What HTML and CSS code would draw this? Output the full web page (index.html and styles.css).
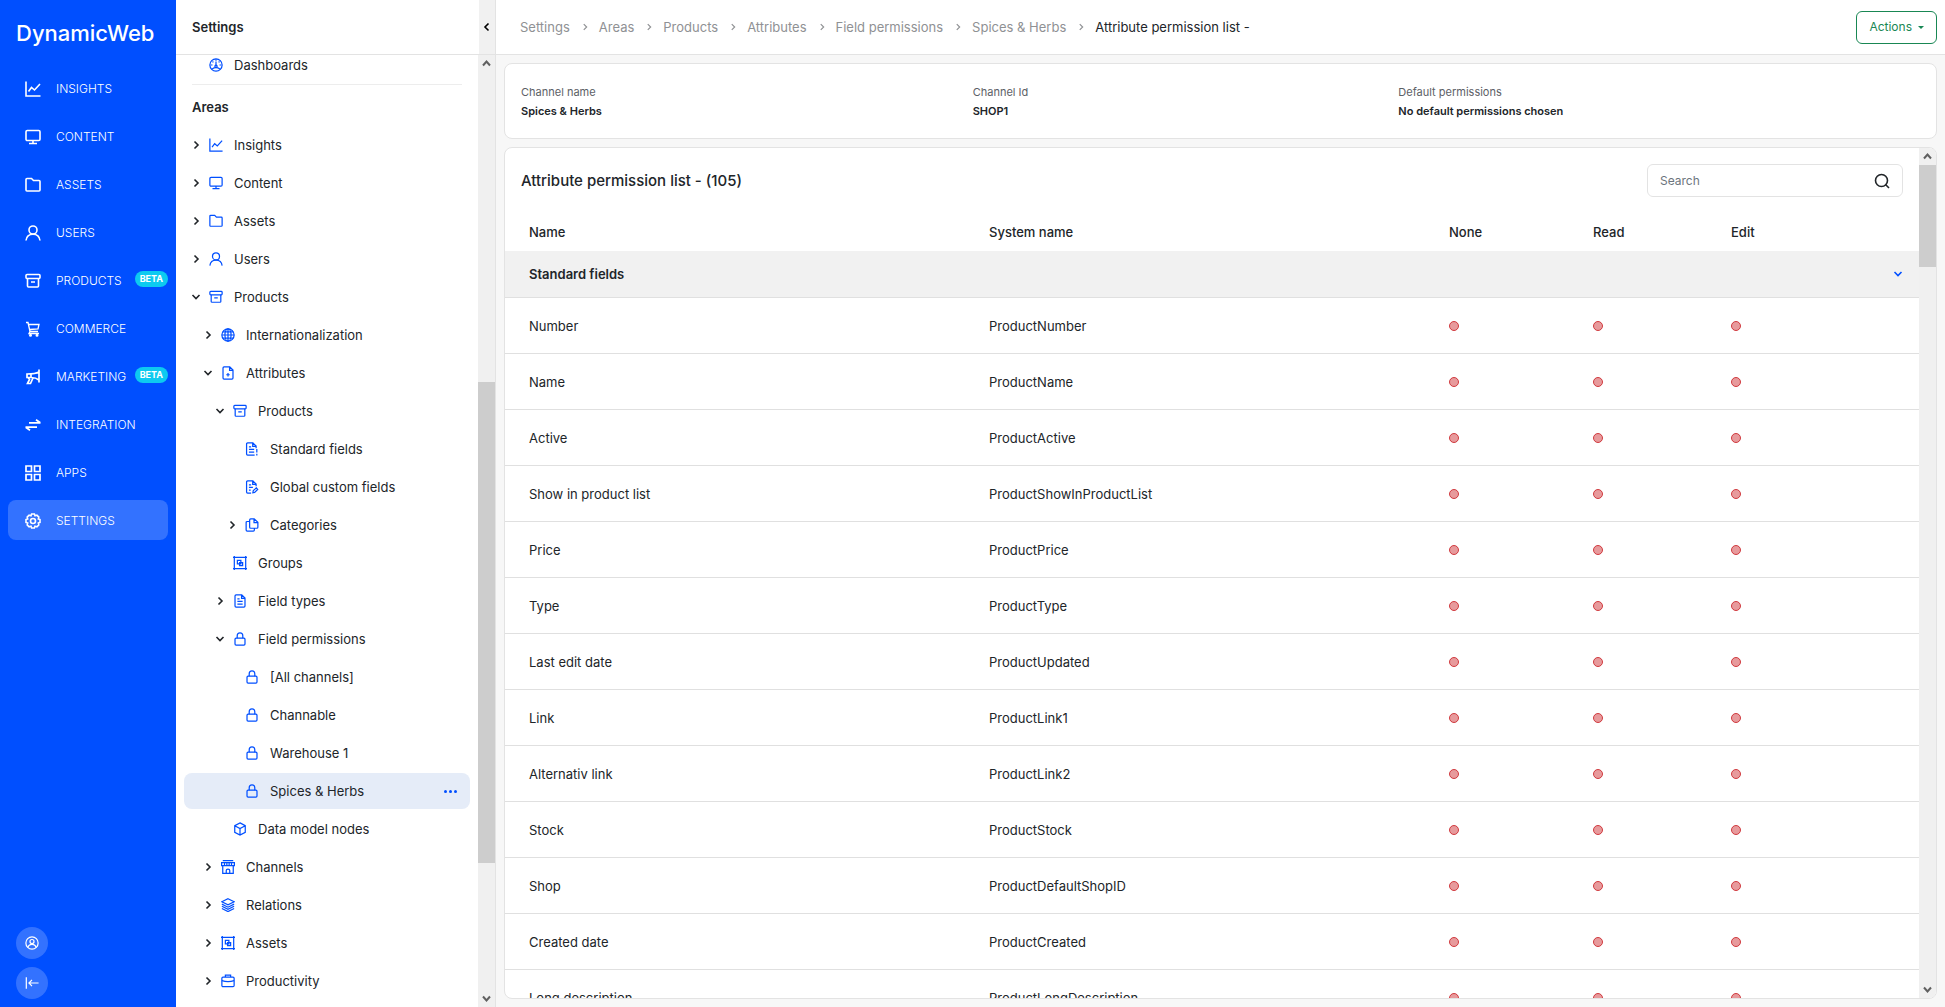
FILE: index.html
```html
<!DOCTYPE html>
<html lang="en">
<head>
<meta charset="utf-8">
<meta name="viewport" content="width=device-width, initial-scale=1">
<title>Attribute permission list</title>
<link rel="stylesheet" href="styles.css">
</head>
<body>
<svg class="sprite" aria-hidden="true">
  <symbol id="i-chart" viewBox="0 0 16 16"><path d="M1 .5V15H15.500M3.500 10.500 6.500 6.500 9.500 9 15 3"/></symbol>
  <symbol id="i-monitor" viewBox="0 0 16 16"><rect x="1" y="1.500" width="14" height="10" rx="1.300"/><path d="M8 11.500V14.500M4 14.500H12"/></symbol>
  <symbol id="i-folder" viewBox="0 0 16 16"><path d="M1 13V2.500Q1 1.500 2 1.500H6.500L8.500 3.500H14Q15 3.500 15 4.500V13Q15 14 14 14H2Q1 14 1 13Z"/></symbol>
  <symbol id="i-user" viewBox="0 0 16 16"><circle cx="8" cy="5" r="4"/><path d="M1 15.500C1.500 11 4 9.200 8 9.200S14.500 11 15 15.500"/></symbol>
  <symbol id="i-archive" viewBox="0 0 16 16"><rect x="1" y="1.500" width="14" height="4" rx="1"/><path d="M2.500 5.500V13Q2.500 14 3.500 14H12.500Q13.500 14 13.500 13V5.500M6 9H10"/></symbol>
  <symbol id="i-cart" viewBox="0 0 16 16"><path d="M1 1.500H3L5 10.500H13M3.500 3.500H14L13 8 4.700 8.500M5 10.500 4 12.500H14" stroke-width="1.300"/><circle cx="5.500" cy="14.300" r=".7"/><circle cx="12" cy="14.300" r=".7"/></symbol>
  <symbol id="i-horn" viewBox="0 0 16 16"><path d="M14 .5V13.500M14 3Q10.500 5 2 5V8.500H6Q11 8.500 14 11M3 8.500 4.500 10.500 2.500 14.500H5.500L8 9M6 5V8.500" stroke-width="1.700"/></symbol>
  <symbol id="i-swap" viewBox="0 0 16 16"><path d="M4 5.800H15.500M11 2.800 15.300 5.800M12 10.200H.5M5 13.200 .7 10.200" stroke-width="1.800"/></symbol>
  <symbol id="i-grid" viewBox="0 0 16 16"><path d="M1 1H6.500V6.500H1ZM9.500 1H15V6.500H9.500ZM1 9.500H6.500V15H1ZM9.500 9.500H15V15H9.500Z" stroke-width="1.700"/></symbol>
  <symbol id="i-gear" viewBox="0 0 16 16"><path d="M6.600 1H9.400L10 2.700 11.900 2.200 13.800 4.100 13.300 6 15 6.600V9.400L13.300 10 13.800 11.900 11.900 13.800 10 13.300 9.400 15H6.600L6 13.300 4.100 13.800 2.200 11.900 2.700 10 1 9.400V6.600L2.700 6 2.200 4.100 4.100 2.200 6 2.700Z" stroke-width="1.600"/><circle cx="8" cy="8" r="2.500"/></symbol>
  <symbol id="i-gauge" viewBox="0 0 16 16"><circle cx="8" cy="8" r="7"/><path d="M8 4V9.500M8 1.500V3M2 8H4M12 8H14M4 4 5 5M12 4 11 5M3.500 12.500Q8 9.500 12.500 12.500"/><circle cx="8" cy="9.500" r="1.300"/></symbol>
  <symbol id="i-globe" viewBox="0 0 16 16"><circle cx="8" cy="8" r="7"/><ellipse cx="8" cy="8" rx="3.500" ry="7"/><path d="M8 1V15M1 8H15M2 4.500H14M2 11.500H14"/></symbol>
  <symbol id="i-file-plus" viewBox="0 0 16 16"><path d="M10 1H3.500Q2.300 1 2.300 2.200V13.800Q2.300 15 3.500 15H12.500Q13.700 15 13.700 13.800V4.700ZM9.800 1V5H13.700M8 8V12M6 10H10"/></symbol>
  <symbol id="i-file" viewBox="0 0 16 16"><path d="M10 1H3.500Q2.300 1 2.300 2.200V13.800Q2.300 15 3.500 15H12.500Q13.700 15 13.700 13.800V4.700ZM9.800 1V5H13.700M5 5.500H7.500M5 8.500H11M5 11.500H11"/></symbol>
  <symbol id="i-file-std" viewBox="0 0 16 16"><path d="M11 15H3Q1.800 15 1.800 13.800V2.200Q1.800 1 3 1H9L12.700 4.700V7M8.800 1V5H12.700M4.500 5.500H7M4.500 8.500H10.500M4.500 11.500H10.500M13.500 8V12M13.500 13.500V15.300"/></symbol>
  <symbol id="i-file-edit" viewBox="0 0 16 16"><path d="M7 15H3Q1.800 15 1.800 13.800V2.200Q1.800 1 3 1H9L12.700 4.700V7M8.800 1V5H12.700M4.500 5.500H7M4.500 8.500H9M4.500 11.500H6.500M9 14.500 9.500 12 13 9 14.500 10.800 11 14.200Z"/></symbol>
  <symbol id="i-files" viewBox="0 0 16 16"><path d="M10.500 1H6.500Q5.300 1 5.300 2.200V10.500Q5.300 11.700 6.500 11.700H13.500Q14.700 11.700 14.700 10.500V5ZM10.300 1V5.200H14.700M5 4H2.500Q1.300 4 1.300 5.200V13.800Q1.300 15 2.500 15H9.500Q10.700 15 10.700 13.800V12"/></symbol>
  <symbol id="i-group" viewBox="0 0 16 16"><path d="M1.500 0V16M14.500 0V16M0 1.500H16M0 14.500H16M5 5H9V9H5ZM7.500 7.500H11V11H7.500Z"/></symbol>
  <symbol id="i-lock" viewBox="0 0 16 16"><rect x="2.300" y="7" width="11.400" height="8" rx="1.200"/><path d="M4.800 7V4.300Q4.800 1 8 1T11.200 4.300V7"/></symbol>
  <symbol id="i-cube" viewBox="0 0 16 16"><path d="M8 1 14 4.200V11.800L8 15 2 11.800V4.200ZM2 4.200 8 7.500 14 4.200M8 7.500V15"/></symbol>
  <symbol id="i-store" viewBox="0 0 16 16"><path d="M2 .7H14M.7 3H15.300V6.500H.7ZM4 3V6.500M6.700 3V6.500M9.300 3V6.500M12 3V6.500M2 6.500V15.300H14V6.500M6 15V12Q6 10.500 8 10.500T10 12V15"/></symbol>
  <symbol id="i-layers" viewBox="0 0 16 16"><path d="M8 .8 15 4.300 8 7.800 1 4.300ZM1 7 8 10.500 15 7M1 9.500 8 13 15 9.500M1 12 8 15.500 15 12"/></symbol>
  <symbol id="i-case" viewBox="0 0 16 16"><rect x="1" y="3.500" width="14" height="11" rx="1.300"/><path d="M5 3.500V1.200H11V3.500M1 7.500Q8 10 15 7.500"/></symbol>
  <symbol id="i-profile" viewBox="0 0 16 16"><circle cx="8" cy="8" r="7"/><circle cx="8" cy="6.300" r="2.300"/><path d="M3.500 13Q4 9.500 8 9.500T12.500 13"/></symbol>
  <symbol id="i-dock" viewBox="0 0 16 16"><path d="M1.500 1.500V14.500M15.500 8H4.500M8 4.500 4.500 8 8 11.500"/></symbol>
  <symbol id="i-right" viewBox="0 0 12 12"><path d="M4.500 2.500 8 6 4.500 9.500"/></symbol>
  <symbol id="i-left" viewBox="0 0 12 12"><path d="M7.500 2.500 4 6 7.500 9.500"/></symbol>
  <symbol id="i-down" viewBox="0 0 12 12"><path d="M2.500 4 6 7.500 9.500 4"/></symbol>
  <symbol id="i-arrow-up" viewBox="0 0 17 17"><path d="M5 10.500 8.500 6.500 12 10.500"/></symbol>
  <symbol id="i-arrow-down" viewBox="0 0 17 17"><path d="M5 6.500 8.500 10.500 12 6.500"/></symbol>
  <symbol id="i-search" viewBox="0 0 16 16"><circle cx="7.500" cy="7.500" r="6"/><path d="M11.500 11.500 15 15"/></symbol>
</svg>

<div class="app">
  <aside class="rail">
    <div class="logo">DynamicWeb</div>
    <nav class="areas" aria-label="Areas">
      <a class="area" href="#"><svg class="icon"><use href="#i-chart"/></svg>INSIGHTS</a>
      <a class="area" href="#"><svg class="icon"><use href="#i-monitor"/></svg>CONTENT</a>
      <a class="area" href="#"><svg class="icon"><use href="#i-folder"/></svg>ASSETS</a>
      <a class="area" href="#"><svg class="icon"><use href="#i-user"/></svg>USERS</a>
      <a class="area" href="#"><svg class="icon"><use href="#i-archive"/></svg>PRODUCTS<span class="beta">BETA</span></a>
      <a class="area" href="#"><svg class="icon"><use href="#i-cart"/></svg>COMMERCE</a>
      <a class="area" href="#"><svg class="icon"><use href="#i-horn"/></svg>MARKETING<span class="beta">BETA</span></a>
      <a class="area" href="#"><svg class="icon"><use href="#i-swap"/></svg>INTEGRATION</a>
      <a class="area" href="#"><svg class="icon"><use href="#i-grid"/></svg>APPS</a>
      <a class="area current" href="#" aria-current="page"><svg class="icon"><use href="#i-gear"/></svg>SETTINGS</a>
    </nav>
    <div class="rail-tools">
      <button class="round" type="button" aria-label="Profile"><svg class="icon small"><use href="#i-profile"/></svg></button>
      <button class="round" type="button" aria-label="Collapse menu"><svg class="icon small"><use href="#i-dock"/></svg></button>
    </div>
  </aside>

  <section class="panel">
    <header class="panel-head">
      <h1 class="panel-title">Settings</h1>
      <button class="fold" type="button" aria-label="Collapse panel"><svg class="chev"><use href="#i-left"/></svg></button>
    </header>
    <div class="panel-body">
      <nav class="tree" aria-label="Settings">
        <a class="node" href="#"><span class="chev"></span><svg class="icon small"><use href="#i-gauge"/></svg>Dashboards</a>
        <h2 class="tree-title">Areas</h2>
        <a class="node" href="#"><svg class="chev"><use href="#i-right"/></svg><svg class="icon small"><use href="#i-chart"/></svg>Insights</a>
        <a class="node" href="#"><svg class="chev"><use href="#i-right"/></svg><svg class="icon small"><use href="#i-monitor"/></svg>Content</a>
        <a class="node" href="#"><svg class="chev"><use href="#i-right"/></svg><svg class="icon small"><use href="#i-folder"/></svg>Assets</a>
        <a class="node" href="#"><svg class="chev"><use href="#i-right"/></svg><svg class="icon small"><use href="#i-user"/></svg>Users</a>
        <a class="node" href="#"><svg class="chev"><use href="#i-down"/></svg><svg class="icon small"><use href="#i-archive"/></svg>Products</a>
        <a class="node l1" href="#"><svg class="chev"><use href="#i-right"/></svg><svg class="icon small"><use href="#i-globe"/></svg>Internationalization</a>
        <a class="node l1" href="#"><svg class="chev"><use href="#i-down"/></svg><svg class="icon small"><use href="#i-file-plus"/></svg>Attributes</a>
        <a class="node l2" href="#"><svg class="chev"><use href="#i-down"/></svg><svg class="icon small"><use href="#i-archive"/></svg>Products</a>
        <a class="node l3" href="#"><span class="chev"></span><svg class="icon small"><use href="#i-file-std"/></svg>Standard fields</a>
        <a class="node l3" href="#"><span class="chev"></span><svg class="icon small"><use href="#i-file-edit"/></svg>Global custom fields</a>
        <a class="node l3" href="#"><svg class="chev"><use href="#i-right"/></svg><svg class="icon small"><use href="#i-files"/></svg>Categories</a>
        <a class="node l2" href="#"><span class="chev"></span><svg class="icon small"><use href="#i-group"/></svg>Groups</a>
        <a class="node l2" href="#"><svg class="chev"><use href="#i-right"/></svg><svg class="icon small"><use href="#i-file"/></svg>Field types</a>
        <a class="node l2" href="#"><svg class="chev"><use href="#i-down"/></svg><svg class="icon small"><use href="#i-lock"/></svg>Field permissions</a>
        <a class="node l3" href="#"><span class="chev"></span><svg class="icon small"><use href="#i-lock"/></svg>[All channels]</a>
        <a class="node l3" href="#"><span class="chev"></span><svg class="icon small"><use href="#i-lock"/></svg>Channable</a>
        <a class="node l3" href="#"><span class="chev"></span><svg class="icon small"><use href="#i-lock"/></svg>Warehouse 1</a>
        <div class="node l3 selected"><span class="chev"></span><svg class="icon small"><use href="#i-lock"/></svg><a class="node-link" href="#" aria-current="page">Spices &amp; Herbs</a><button class="more" type="button" aria-label="More"><i class="pip"></i><i class="pip"></i><i class="pip"></i></button></div>
        <a class="node l2" href="#"><span class="chev"></span><svg class="icon small"><use href="#i-cube"/></svg>Data model nodes</a>
        <a class="node l1" href="#"><svg class="chev"><use href="#i-right"/></svg><svg class="icon small"><use href="#i-store"/></svg>Channels</a>
        <a class="node l1" href="#"><svg class="chev"><use href="#i-right"/></svg><svg class="icon small"><use href="#i-layers"/></svg>Relations</a>
        <a class="node l1" href="#"><svg class="chev"><use href="#i-right"/></svg><svg class="icon small"><use href="#i-group"/></svg>Assets</a>
        <a class="node l1" href="#"><svg class="chev"><use href="#i-right"/></svg><svg class="icon small"><use href="#i-case"/></svg>Productivity</a>
      </nav>
      <div class="scrollbar" aria-hidden="true">
        <svg class="arrow"><use href="#i-arrow-up"/></svg>
        <div class="track tree-track"><div class="thumb"></div></div>
        <svg class="arrow"><use href="#i-arrow-down"/></svg>
      </div>
    </div>
  </section>

  <main class="main">
    <header class="topbar">
      <nav class="crumbs" aria-label="Breadcrumb">
        <a class="crumb" href="#">Settings</a><svg class="sep"><use href="#i-right"/></svg>
        <a class="crumb" href="#">Areas</a><svg class="sep"><use href="#i-right"/></svg>
        <a class="crumb" href="#">Products</a><svg class="sep"><use href="#i-right"/></svg>
        <a class="crumb" href="#">Attributes</a><svg class="sep"><use href="#i-right"/></svg>
        <a class="crumb" href="#">Field permissions</a><svg class="sep"><use href="#i-right"/></svg>
        <a class="crumb" href="#">Spices &amp; Herbs</a><svg class="sep"><use href="#i-right"/></svg>
        <span class="crumb here" aria-current="page">Attribute permission list -</span>
      </nav>
      <button class="actions" type="button">Actions<span class="caret"></span></button>
    </header>

    <div class="content">
      <dl class="card info">
        <div><dt>Channel name</dt><dd>Spices &amp; Herbs</dd></div>
        <div><dt>Channel Id</dt><dd>SHOP1</dd></div>
        <div><dt>Default permissions</dt><dd>No default permissions chosen</dd></div>
      </dl>

      <section class="card list">
        <div class="list-main">
          <div class="list-head">
            <h2 class="list-title">Attribute permission list - (105)</h2>
            <label class="search"><input class="search-input" type="text" placeholder="Search" aria-label="Search"><svg class="icon"><use href="#i-search"/></svg></label>
          </div>
          <table class="grid">
            <colgroup><col><col><col class="c-none"><col class="c-read"><col class="c-edit"></colgroup>
            <thead><tr><th>Name</th><th>System name</th><th>None</th><th>Read</th><th>Edit</th></tr></thead>
            <tbody>
              <tr class="group"><th colspan="5"><span class="group-in">Standard fields<button class="group-toggle" type="button" aria-label="Collapse group"><svg class="chev"><use href="#i-down"/></svg></button></span></th></tr>
              <tr><td>Number</td><td>ProductNumber</td><td><span class="dot"></span></td><td><span class="dot"></span></td><td><span class="dot"></span></td></tr>
              <tr><td>Name</td><td>ProductName</td><td><span class="dot"></span></td><td><span class="dot"></span></td><td><span class="dot"></span></td></tr>
              <tr><td>Active</td><td>ProductActive</td><td><span class="dot"></span></td><td><span class="dot"></span></td><td><span class="dot"></span></td></tr>
              <tr><td>Show in product list</td><td>ProductShowInProductList</td><td><span class="dot"></span></td><td><span class="dot"></span></td><td><span class="dot"></span></td></tr>
              <tr><td>Price</td><td>ProductPrice</td><td><span class="dot"></span></td><td><span class="dot"></span></td><td><span class="dot"></span></td></tr>
              <tr><td>Type</td><td>ProductType</td><td><span class="dot"></span></td><td><span class="dot"></span></td><td><span class="dot"></span></td></tr>
              <tr><td>Last edit date</td><td>ProductUpdated</td><td><span class="dot"></span></td><td><span class="dot"></span></td><td><span class="dot"></span></td></tr>
              <tr><td>Link</td><td>ProductLink1</td><td><span class="dot"></span></td><td><span class="dot"></span></td><td><span class="dot"></span></td></tr>
              <tr><td>Alternativ link</td><td>ProductLink2</td><td><span class="dot"></span></td><td><span class="dot"></span></td><td><span class="dot"></span></td></tr>
              <tr><td>Stock</td><td>ProductStock</td><td><span class="dot"></span></td><td><span class="dot"></span></td><td><span class="dot"></span></td></tr>
              <tr><td>Shop</td><td>ProductDefaultShopID</td><td><span class="dot"></span></td><td><span class="dot"></span></td><td><span class="dot"></span></td></tr>
              <tr><td>Created date</td><td>ProductCreated</td><td><span class="dot"></span></td><td><span class="dot"></span></td><td><span class="dot"></span></td></tr>
              <tr><td>Long description</td><td>ProductLongDescription</td><td><span class="dot"></span></td><td><span class="dot"></span></td><td><span class="dot"></span></td></tr>
            </tbody>
          </table>
        </div>
        <div class="scrollbar" aria-hidden="true">
          <svg class="arrow"><use href="#i-arrow-up"/></svg>
          <div class="track list-track"><div class="thumb"></div></div>
          <svg class="arrow"><use href="#i-arrow-down"/></svg>
        </div>
      </section>
    </div>
  </main>
</div>
</body>
</html>
```
FILE: styles.css
```css
* { box-sizing: border-box; }

body {
  margin: 0;
  font: 13px/20px Inter, "Liberation Sans", sans-serif;
  color: #212529;
  background: #f7f7f7;
}

h1, h2, dl, dd { margin: 0; }
a { color: inherit; text-decoration: none; }
button { font: inherit; padding: 0; border: 0; background: none; cursor: pointer; }

.sprite { position: absolute; width: 0; height: 0; }
.icon, .chev, .arrow, .sep {
  flex: none;
  fill: none;
  stroke: currentColor;
}
.icon { width: 16px; height: 16px; stroke-width: 1.6; }
.small { width: 14px; height: 14px; stroke-width: 1.4; }
.chev { width: 12px; height: 12px; stroke-width: 1.6; }

.app { display: flex; height: 100vh; overflow: hidden; }

/* Blue area rail */
.rail {
  display: flex;
  flex-direction: column;
  flex: none;
  width: 176px;
  padding: 0 8px 8px;
  background: #004fff;
  color: #fff;
}
.logo { padding: 21px 8px 15px; font-size: 22px; line-height: 24px; font-weight: 500; }
.areas { display: flex; flex-direction: column; gap: 8px; padding-top: 8px; }
.area {
  display: flex;
  align-items: center;
  height: 40px;
  padding: 2px 0 0 17px;
  border-radius: 8px;
  font-size: 12px;
  font-weight: 300;
}
.area .icon { margin-right: 15px; }
.area.current { background: #3372ff; }
.beta {
  margin: 0 0 4px auto;
  padding: 0 5px;
  border-radius: 8px;
  background: #0dcaf0;
  font-size: 9px;
  line-height: 16px;
  font-weight: 700;
}
.rail-tools { display: flex; flex-direction: column; gap: 8px; margin-top: auto; padding-left: 8px; }
.round {
  display: flex;
  align-items: center;
  justify-content: center;
  width: 32px;
  height: 32px;
  border-radius: 50%;
  background: #3372ff;
  color: #fff;
}

/* Settings tree */
.panel {
  display: flex;
  flex-direction: column;
  flex: none;
  width: 320px;
  border-right: 1px solid #e3e3e3;
  background: #fff;
}
.panel-head { display: flex; flex: none; height: 55px; border-bottom: 1px solid #e3e3e3; }
.panel-title { flex: 1; padding-left: 16px; font-size: 13px; line-height: 54px; font-weight: 600; }
.fold {
  display: flex;
  align-items: center;
  justify-content: center;
  width: 16px;
  background: #f1f1f1;
  color: #000;
}
.panel-body { display: flex; flex: 1; min-height: 0; }
.tree {
  display: flex;
  flex-direction: column;
  gap: 2px;
  flex: 1;
  margin-top: -8px;
  padding: 0 8px;
  clip-path: inset(8px 0 0 0);
}
.node {
  display: flex;
  align-items: center;
  flex: none;
  height: 36px;
  padding-left: 6px;
  border-radius: 8px;
}
.node .icon { margin: 0 11px 0 7px; color: #004fff; }
.node.l1 { padding-left: 18px; }
.node.l2 { padding-left: 30px; }
.node.l3 { padding-left: 42px; }
.selected { background: #e5ecf8; }
.node-link { flex: 1; }
.more { display: flex; gap: 2px; padding: 8px 13px; color: #004fff; }
.pip { width: 3px; height: 3px; border-radius: 50%; background: currentColor; }
.tree-title {
  margin: -1px 8px 0;
  padding: 12px 0 8px;
  border-top: 1px solid #ededed;
  font-size: 13px;
  line-height: 20px;
  font-weight: 600;
}

.scrollbar { display: flex; flex-direction: column; flex: none; width: 17px; background: #f0f0f0; }
.arrow { width: 17px; height: 17px; stroke: #606060; stroke-width: 2; }
.track { display: grid; flex: 1; }
.tree-track { grid-template-rows: 310fr 481fr 127fr; }
.list-track { grid-template-rows: 0 102fr 715fr; }
.thumb { grid-row: 2; background: #cdcdcd; }

/* Right side */
.main { display: flex; flex-direction: column; flex: 1; min-width: 0; }
.topbar {
  display: flex;
  align-items: center;
  justify-content: space-between;
  flex: none;
  height: 55px;
  padding: 0 8px 0 24px;
  border-bottom: 1px solid #e3e3e3;
  background: #fff;
}
.crumbs { display: flex; align-items: center; color: #8f9194; }
.sep { width: 10px; height: 10px; margin: 0 9px 0 10px; stroke-width: 1.4; }
.here { color: #212529; }
.actions {
  display: flex;
  align-items: center;
  gap: 6px;
  height: 33px;
  padding: 0 12px;
  border: 1px solid #198754;
  border-radius: 6px;
  color: #198754;
  font-size: 12px;
}
.caret { border: 3px solid transparent; border-top-color: currentColor; border-bottom: 0; }

.content { display: flex; flex-direction: column; gap: 8px; flex: 1; min-height: 0; padding: 8px; }
.card { border: 1px solid #e3e3e3; border-radius: 8px; background: #fff; }
.info {
  display: grid;
  grid-template-columns: 452fr 426fr 522fr;
  flex: none;
  padding: 19px 16px 17px;
  font-size: 11px;
  line-height: 19px;
}
.info dt { color: #5c6066; }
.info dd { font-weight: 600; }

.list { display: flex; flex: 1; min-height: 0; overflow: hidden; }
.list-main { flex: 1; min-width: 0; }
.list-head { display: flex; align-items: center; justify-content: space-between; padding: 16px; }
.list-title { font-size: 15px; font-weight: 500; }
.search {
  display: flex;
  align-items: center;
  width: 256px;
  height: 33px;
  padding: 0 12px;
  border: 1px solid #e3e3e3;
  border-radius: 6px;
}
.search-input { flex: 1; min-width: 0; padding: 0; border: 0; outline: 0; font: inherit; font-size: 12px; }
.search-input::placeholder { color: #6c757d; opacity: 1; }

.grid { width: 100%; table-layout: fixed; border-collapse: separate; border-spacing: 0; }
.c-none { width: 144px; }
.c-read { width: 138px; }
.c-edit { width: 212px; }
.grid th, .grid td { height: 56px; padding: 0 0 0 24px; border-bottom: 1px solid #e0e0e0; text-align: left; }
.grid thead th { height: 38px; border: 0; font-weight: 500; }
.grid .group th { height: 47px; background: #f1f1f1; font-weight: 600; }
.group-in { display: flex; align-items: center; justify-content: space-between; }
.group-toggle { display: flex; padding: 0 15px; color: #004fff; }
.dot {
  display: block;
  width: 10px;
  height: 10px;
  border: 1px solid #d13a3f;
  border-radius: 50%;
  background: #e79a9c;
}
```
